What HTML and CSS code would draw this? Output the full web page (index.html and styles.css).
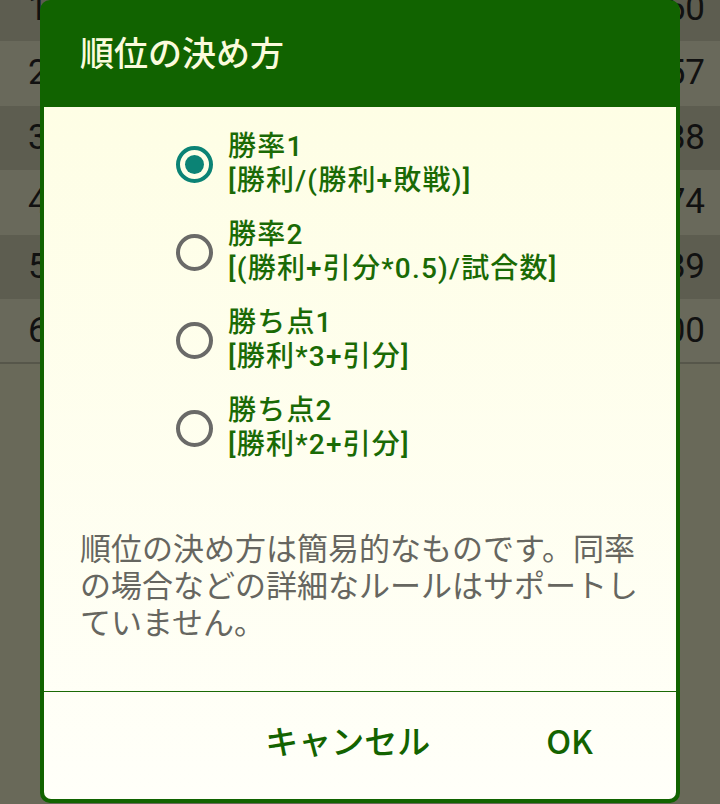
FILE: index.html
```html
<!DOCTYPE html>
<html lang="ja">
<head>
<meta charset="utf-8">
<title>順位の決め方</title>
<link rel="stylesheet" href="styles.css">
</head>
<body>
<div class="table">
  <div class="row row-first dark"><span class="num">1</span><span class="val">0.750</span></div>
  <div class="row light"><span class="num">2</span><span class="val">0.657</span></div>
  <div class="row dark"><span class="num">3</span><span class="val">0.588</span></div>
  <div class="row light"><span class="num">4</span><span class="val">0.474</span></div>
  <div class="row dark"><span class="num">5</span><span class="val">0.389</span></div>
  <div class="row light last"><span class="num">6</span><span class="val">0.300</span></div>
</div>

<div class="dialog">
  <div class="header"><h1 class="title">順位の決め方</h1></div>
  <div class="body">
    <div class="options">
      <div class="option">
        <span class="radio checked"></span>
        <div class="label"><div>勝率1</div><div>[勝利/(勝利+敗戦)]</div></div>
      </div>
      <div class="option">
        <span class="radio"></span>
        <div class="label"><div>勝率2</div><div>[(勝利+引分*0.5)/試合数]</div></div>
      </div>
      <div class="option">
        <span class="radio"></span>
        <div class="label"><div>勝ち点1</div><div>[勝利*3+引分]</div></div>
      </div>
      <div class="option">
        <span class="radio"></span>
        <div class="label"><div>勝ち点2</div><div>[勝利*2+引分]</div></div>
      </div>
    </div>
    <p class="desc">順位の決め方は簡易的なものです。同率の場合などの詳細なルールはサポートしていません。</p>
    <div class="divider"></div>
    <div class="actions">
      <span class="btn btn-cancel">キャンセル</span>
      <span class="btn btn-ok">OK</span>
    </div>
  </div>
</div>
</body>
</html>
```

FILE: styles.css
```css
html, body {
  margin: 0;
  padding: 0;
}
body {
  width: 720px;
  height: 804px;
  overflow: hidden;
  position: relative;
  background: #696959;
  font-family: "Noto Sans CJK JP", "Noto Sans", sans-serif;
}

/* dimmed background table */
.table {
  display: flex;
  flex-direction: column;
  margin-top: -23.6px;
}
.row {
  height: 64.6px;
  display: flex;
  align-items: center;
  justify-content: space-between;
  padding: 0 15px 0 28px;
  font-family: Roboto, "Noto Sans", sans-serif;
  font-size: 35px;
  line-height: 40px;
  color: #111;
  box-sizing: border-box;
}
.dark { background: #5d5d50; }
.light { background: #69695b; }
.last { border-bottom: 2px solid #56564a; }

/* dialog */
.dialog {
  position: absolute;
  left: 40px;
  top: 0;
  width: 640px;
  height: 803px;
  border-radius: 10px;
  background: #116300;
  display: flex;
  flex-direction: column;
  overflow: hidden;
}
.header {
  height: 107px;
  flex: none;
  display: flex;
  align-items: center;
  padding: 0 0 3px 40px;
  box-sizing: border-box;
}
.title {
  margin: 0;
  font-size: 34px;
  font-weight: 500;
  line-height: 50px;
  color: #fbfbdc;
}
.body {
  flex: 1;
  margin: 0 4px 4px;
  border-radius: 0 0 7px 7px;
  background: linear-gradient(#fefee5, #fffff9);
  display: flex;
  flex-direction: column;
}
.options {
  padding: 23px 0 0 132px;
  display: flex;
  flex-direction: column;
  gap: 20px;
}
.option {
  display: flex;
  align-items: center;
  gap: 15px;
}
.radio {
  width: 37px;
  height: 37px;
  box-sizing: border-box;
  border: 4.5px solid #6a6a68;
  border-radius: 50%;
  flex: none;
  display: flex;
  align-items: center;
  justify-content: center;
}
.radio.checked {
  border-color: #0b8375;
}
.radio.checked::after {
  content: "";
  width: 19px;
  height: 19px;
  border-radius: 50%;
  background: #0b8375;
}
.label {
  font-family: Roboto, "Noto Sans CJK JP", sans-serif;
  font-size: 28px;
  line-height: 34px;
  font-weight: 500;
  letter-spacing: 1.2px;
  color: #1a6a05;
}
.desc {
  margin: 69px 30px 0 36px;
  font-family: Roboto, "Noto Sans CJK JP", sans-serif;
  font-size: 31px;
  line-height: 37px;
  color: #666660;
}
.divider {
  margin-top: auto;
  height: 1.5px;
  background: #1a6a05;
}
.actions {
  height: 107px;
  display: flex;
  align-items: center;
  justify-content: flex-end;
  padding: 0 83px 12px 0;
  box-sizing: border-box;
  gap: 116px;
}
.btn {
  font-size: 33px;
  line-height: 48px;
  font-weight: 500;
  color: #136300;
}
```
